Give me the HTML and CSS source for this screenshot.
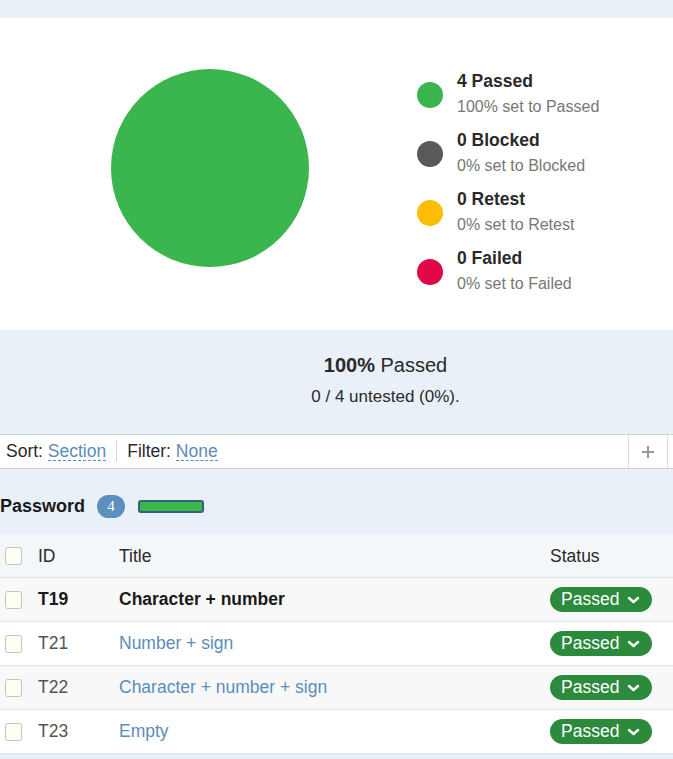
FILE: index.html
```html
<!DOCTYPE html>
<html>
<head>
<meta charset="utf-8">
<link rel="stylesheet" href="styles.css">
</head>
<body>
<div class="topband"></div>
<section class="chart">
  <div class="pie"></div>
  <ul class="legend">
    <li class="item"><span class="dot dot-passed"></span><div class="txt"><div class="ttl">4 Passed</div><div class="sub">100% set to Passed</div></div></li>
    <li class="item"><span class="dot dot-blocked"></span><div class="txt"><div class="ttl">0 Blocked</div><div class="sub">0% set to Blocked</div></div></li>
    <li class="item"><span class="dot dot-retest"></span><div class="txt"><div class="ttl">0 Retest</div><div class="sub">0% set to Retest</div></div></li>
    <li class="item"><span class="dot dot-failed"></span><div class="txt"><div class="ttl">0 Failed</div><div class="sub">0% set to Failed</div></div></li>
  </ul>
</section>
<section class="summary">
  <div class="pct"><b>100%</b> Passed</div>
  <div class="untested">0 / 4 untested (0%).</div>
</section>
<div class="filterbar">
  <div class="filters">
    <span class="lbl">Sort: <a class="dash">Section</a></span>
    <span class="sep"></span>
    <span class="lbl">Filter: <a class="dash">None</a></span>
  </div>
  <div class="addbtn"><svg width="14" height="14" viewBox="0 0 14 14"><path d="M7 1v12M1 7h12" stroke="#999" stroke-width="2" fill="none"/></svg></div>
  <div class="edge"></div>
</div>
<section class="group">
  <div class="grouphead">
    <span class="gname">Password</span>
    <span class="badge">4</span>
    <span class="bar"></span>
  </div>
  <div class="table">
    <div class="row head">
      <div class="cb"><span class="box"></span></div>
      <div>ID</div>
      <div>Title</div>
      <div>Status</div>
    </div>
    <div class="row alt">
      <div class="cb"><span class="box"></span></div>
      <div class="id strong">T19</div>
      <div class="title strong">Character + number</div>
      <div><span class="pill">Passed <svg width="13" height="8" viewBox="0 0 13 8"><path d="M2 2l4.5 4 4.5-4" stroke="#fff" stroke-width="2.4" fill="none" stroke-linecap="round" stroke-linejoin="round"/></svg></span></div>
    </div>
    <div class="row">
      <div class="cb"><span class="box"></span></div>
      <div class="id">T21</div>
      <div class="title link">Number + sign</div>
      <div><span class="pill">Passed <svg width="13" height="8" viewBox="0 0 13 8"><path d="M2 2l4.5 4 4.5-4" stroke="#fff" stroke-width="2.4" fill="none" stroke-linecap="round" stroke-linejoin="round"/></svg></span></div>
    </div>
    <div class="row alt">
      <div class="cb"><span class="box"></span></div>
      <div class="id">T22</div>
      <div class="title link">Character + number + sign</div>
      <div><span class="pill">Passed <svg width="13" height="8" viewBox="0 0 13 8"><path d="M2 2l4.5 4 4.5-4" stroke="#fff" stroke-width="2.4" fill="none" stroke-linecap="round" stroke-linejoin="round"/></svg></span></div>
    </div>
    <div class="row">
      <div class="cb"><span class="box"></span></div>
      <div class="id">T23</div>
      <div class="title link">Empty</div>
      <div><span class="pill">Passed <svg width="13" height="8" viewBox="0 0 13 8"><path d="M2 2l4.5 4 4.5-4" stroke="#fff" stroke-width="2.4" fill="none" stroke-linecap="round" stroke-linejoin="round"/></svg></span></div>
    </div>
  </div>
</section>
<div class="bottomband"></div>
</body>
</html>
```
FILE: styles.css
```css
* { box-sizing: border-box; }
html, body { margin: 0; padding: 0; }
body {
  width: 673px;
  font-family: "Liberation Sans", Arial, sans-serif;
  font-size: 17.5px;
  color: #222;
  background: #fff;
  overflow: hidden;
}
.topband { height: 18px; background: #e9f0f7; }
.chart {
  display: flex;
  align-items: flex-start;
  padding: 51px 0 31px 111px;
  background: #fff;
  height: 312px;
}
.pie {
  width: 198px;
  height: 198px;
  border-radius: 50%;
  background: #3bb64f;
  flex: none;
}
.legend {
  list-style: none;
  margin: 0 0 0 108px;
  padding: 0;
  display: flex;
  flex-direction: column;
  gap: 7px;
}
.item { display: flex; align-items: center; gap: 14px; }
.dot { width: 26px; height: 26px; border-radius: 50%; flex: none; }
.dot-passed { background: #3bb64f; }
.dot-blocked { background: #595959; }
.dot-retest { background: #fcbd03; }
.dot-failed { background: #e1084a; }
.ttl { font-weight: bold; font-size: 17.5px; line-height: 24px; color: #2a2a2a; }
.sub { font-size: 16px; line-height: 28px; color: #777; }
.summary {
  background: #e9f0f7;
  height: 104px;
  text-align: center;
  padding: 20px 0 0 98px;
  color: #2a2a2a;
}
.pct { font-size: 20px; line-height: 30px; }
.untested { font-size: 17px; line-height: 30px; margin-top: 2px; }
.filterbar {
  display: flex;
  align-items: stretch;
  height: 35px;
  background: #fff;
  border-top: 1px solid #c7d4df;
  border-bottom: 1px solid #c7d4df;
}
.filters { flex: 1; display: flex; align-items: center; padding-left: 6px; gap: 10px; }
.lbl { color: #2a2a2a; }
.dash { color: #5b8dba; border-bottom: 1px dashed #5b8dba; line-height: 18px; display: inline-block; }
.sep { width: 1px; height: 21px; background: #d3d9df; }
.addbtn {
  width: 40px;
  border-left: 1px solid #dcdcdc;
  border-right: 1px solid #dcdcdc;
  display: flex;
  align-items: center;
  justify-content: center;
}
.edge { width: 5px; }
.group { background: #e9f0f7; }
.grouphead {
  height: 66px;
  display: flex;
  align-items: center;
  padding-top: 8px;
}
.gname { font-weight: bold; font-size: 18px; color: #1a1a1a; }
.badge {
  margin-left: 12px;
  width: 28px;
  height: 23px;
  border-radius: 12px;
  background: #5b8fbe;
  color: #fff;
  font-family: "Liberation Serif", serif;
  font-size: 15px;
  display: inline-flex;
  align-items: center;
  justify-content: center;
}
.bar {
  margin-left: 13px;
  width: 66px;
  height: 13px;
  border: 2px solid #36607c;
  border-radius: 3px;
  background: #3bb64f;
  display: inline-block;
}
.table { background: #fff; }
.row {
  display: grid;
  grid-template-columns: 38px 81px 1fr 123px;
  align-items: center;
  height: 44px;
  border-top: 1px solid #dde4eb;
  background: #fff;
}
.row.head { background: #f3f7fa; border-top: none; height: 42px; color: #2a2a2a; }
.row.alt { background: #f8f8f8; }
.cb { padding-left: 5px; display: flex; align-items: center; }
.box {
  width: 17px;
  height: 18px;
  border: 1px solid #bfc4c9;
  border-radius: 3px;
  background: #fffff2;
  display: inline-block;
}
.id { color: #555; }
.strong { font-weight: bold; color: #1a1a1a; }
.link { color: #5b8dba; }
.pill {
  display: inline-flex;
  align-items: center;
  gap: 8px;
  height: 25px;
  width: 102px;
  padding-left: 11px;
  border-radius: 13px;
  background: #2c8a3c;
  color: #fff;
  font-size: 17.5px;
}
.bottomband { height: 10px; background: #e9f0f7; border-top: 1px solid #dde4eb; }
```
